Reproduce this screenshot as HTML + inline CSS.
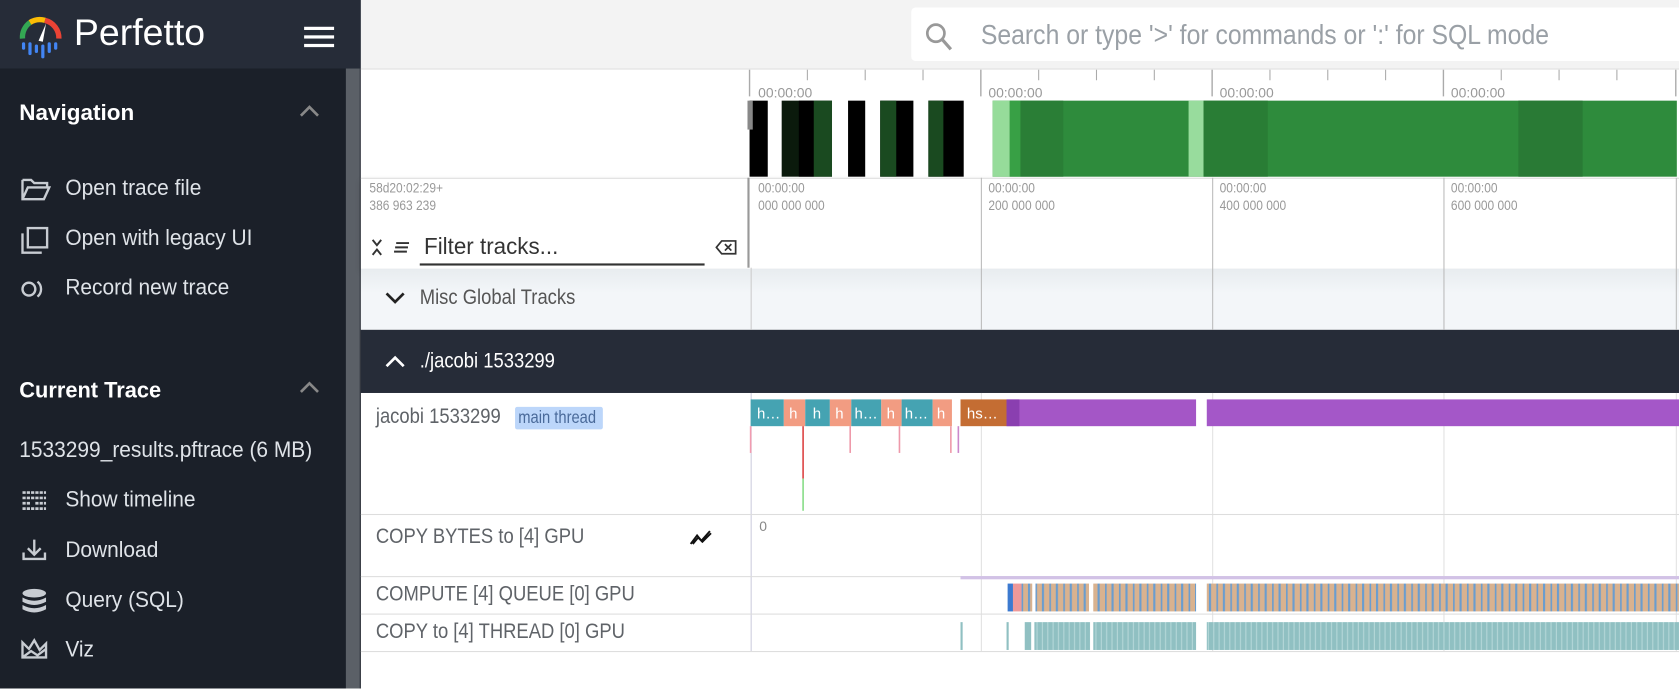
<!DOCTYPE html>
<html><head><meta charset="utf-8"><style>
html,body{margin:0;padding:0;width:1679px;height:688px;overflow:hidden;background:#fff;font-family:"Liberation Sans",sans-serif}
#w{position:absolute;left:0;top:0;width:1568px;height:643px;transform:scale(1.07079);transform-origin:0 0;overflow:hidden;background:#fff}
.a{position:absolute}
.c{display:inline-block;transform:scaleX(.86);transform-origin:left center;white-space:nowrap}
.side{color:#dfe3e8;font-size:21px}
.side .c{transform:scaleX(.93)}
.lbl{color:#5f6368;font-size:20px}
.t{font-size:13px;color:#999;line-height:16px}
.vl{position:absolute;width:1px;background:#e2e2e2}
</style></head><body><div id="w">
<!-- sidebar -->
<div class="a" style="left:0;top:0;width:337px;height:643px;background:#1b2029"></div>
<div class="a" style="left:0;top:0;width:337px;height:64px;background:#262c38"></div>
<div class="a" style="left:323px;top:64px;width:13px;height:579px;background:#5b6067"></div>
<svg class="a" style="left:16px;top:12px" width="44" height="44" viewBox="0 0 44 44">
<path d="M5 24 A17 17 0 0 1 12 9" stroke="#34a853" stroke-width="5" fill="none"/>
<path d="M12 9 A17 17 0 0 1 26 7" stroke="#fbbc05" stroke-width="5" fill="none"/>
<path d="M26 7 A17 17 0 0 1 39 24" stroke="#ea4335" stroke-width="5" fill="none"/>
<path d="M20 26 L27 10 L24 27 Z" fill="#fff"/>
<g stroke="#4285f4" stroke-width="3" stroke-linecap="round"><line x1="6" y1="29" x2="6" y2="33"/><line x1="12" y1="29" x2="12" y2="38"/><line x1="18" y1="31" x2="18" y2="36"/><line x1="24" y1="31" x2="24" y2="41"/><line x1="30" y1="29" x2="30" y2="36"/><line x1="36" y1="29" x2="36" y2="33"/></g></svg>
<div class="a" style="left:69px;top:11px;color:#fff;font-size:35px"><span class="c" style="transform:scaleX(1)">Perfetto</span></div>
<div class="a" style="left:284px;top:25px;width:28px;height:3px;background:#fff;box-shadow:0 8px 0 #fff,0 16px 0 #fff"></div>
<div class="a" style="left:18px;top:94px;color:#fff;font-size:21px;font-weight:bold"><span class="c" style="transform:scaleX(1)">Navigation</span></div>
<svg class="a" style="left:279px;top:97px" width="20" height="14"><path d="M2 11 L10 3 L18 11" stroke="#888" stroke-width="2.5" fill="none"/></svg>
<div class="a" style="left:18px;top:353px;color:#fff;font-size:21px;font-weight:bold"><span class="c" style="transform:scaleX(.97)">Current Trace</span></div>
<svg class="a" style="left:279px;top:355px" width="20" height="14"><path d="M2 11 L10 3 L18 11" stroke="#888" stroke-width="2.5" fill="none"/></svg>
<div class="a side" style="left:61px;top:164px"><span class="c">Open trace file</span></div>
<div class="a side" style="left:61px;top:211px"><span class="c">Open with legacy UI</span></div>
<div class="a side" style="left:61px;top:257px"><span class="c">Record new trace</span></div>
<div class="a side" style="left:18px;top:409px"><span class="c">1533299_results.pftrace (6 MB)</span></div>
<div class="a side" style="left:61px;top:455px"><span class="c">Show timeline</span></div>
<div class="a side" style="left:61px;top:502px"><span class="c">Download</span></div>
<div class="a side" style="left:61px;top:549px"><span class="c">Query (SQL)</span></div>
<div class="a side" style="left:61px;top:595px"><span class="c">Viz</span></div>
<svg class="a" style="left:19px;top:164px" width="30" height="460" fill="none" stroke="#c8ccd2" stroke-width="2.2">
<path d="M2 4 H10 L13 7 H25 V11 M2 4 V22 H22 L27 11 H7 L2 22"/>
<rect x="7" y="49" width="18" height="18"/><path d="M2 54 V72 H20"/>
<circle cx="8" cy="106" r="6"/><path d="M16 99 A9 9 0 0 1 16 113"/>
<g stroke-width="2.5"><path d="M2 296 H24 M2 301 H24 M2 306 H10 M14 306 H24 M2 311 H24" stroke-dasharray="3 1"/></g>
<path d="M13 340 V354 M7 348 L13 354 L19 348 M3 352 V358 H23 V352"/>
<g fill="#c8ccd2" stroke="none"><ellipse cx="13" cy="390" rx="11" ry="4"/><path d="M2 394 Q13 400 24 394 V398 Q13 404 2 398Z"/><path d="M2 401 Q13 407 24 401 V405 Q13 411 2 405Z"/></g>
<path d="M2 450 V436 L8 442 L13 434 L18 443 L24 437 V450 Z M2 450 L10 444 L16 448 L24 442"/>
</svg>
<!-- topbar -->
<div class="a" style="left:337px;top:0;width:1231px;height:64px;background:#f3f3f3;border-bottom:1px solid #ddd"></div>
<div class="a" style="left:851px;top:7px;width:730px;height:50px;background:#fff;border-radius:4px"></div>
<svg class="a" style="left:862px;top:19px" width="30" height="30"><circle cx="12" cy="12" r="8" stroke="#999" stroke-width="2.5" fill="none"/><path d="M18 18 L26 27" stroke="#999" stroke-width="3"/></svg>
<div class="a" style="left:916px;top:17px;color:#9aa0a6;font-size:26px"><span class="c" style="transform:scaleX(.89)">Search or type '&gt;' for commands or ':' for SQL mode</span></div>
<!-- overview -->
<div class="a" style="left:337px;top:65px;width:1231px;height:101px;background:#fff"></div>
<svg class="a" style="left:698px;top:65px" width="870" height="101">
<g stroke="#aaa" stroke-width="1.3"><line x1="2" y1="0" x2="2" y2="25"/><line x1="218" y1="0" x2="218" y2="25"/><line x1="434" y1="0" x2="434" y2="25"/><line x1="650" y1="0" x2="650" y2="25"/><line x1="867" y1="0" x2="867" y2="25"/>
<g stroke-width="1"><line x1="56" y1="0" x2="56" y2="10"/><line x1="110" y1="0" x2="110" y2="10"/><line x1="164" y1="0" x2="164" y2="10"/><line x1="272" y1="0" x2="272" y2="10"/><line x1="326" y1="0" x2="326" y2="10"/><line x1="380" y1="0" x2="380" y2="10"/><line x1="488" y1="0" x2="488" y2="10"/><line x1="542" y1="0" x2="542" y2="10"/><line x1="596" y1="0" x2="596" y2="10"/><line x1="704" y1="0" x2="704" y2="10"/><line x1="758" y1="0" x2="758" y2="10"/><line x1="812" y1="0" x2="812" y2="10"/></g></g>
<g font-size="13" fill="#999" font-family="Liberation Sans"><text x="10" y="26">00:00:00</text><text x="225" y="26">00:00:00</text><text x="441" y="26">00:00:00</text><text x="657" y="26">00:00:00</text></g>
<rect x="2" y="29" width="17" height="71" fill="#000"/><rect x="32" y="29" width="47" height="71" fill="#0b1a0c"/><rect x="48" y="29" width="14" height="71" fill="#000"/><rect x="62" y="29" width="17" height="71" fill="#1a4a20"/>
<rect x="94" y="29" width="16" height="71" fill="#000"/><rect x="124" y="29" width="31" height="71" fill="#000"/><rect x="124" y="29" width="15" height="71" fill="#1a4a20"/>
<rect x="169" y="29" width="33" height="71" fill="#000"/><rect x="169" y="29" width="14" height="71" fill="#1a4a20"/>
<rect x="0" y="29" width="5" height="27" fill="#888"/>
<rect x="229" y="29" width="639" height="71" fill="#2e8b3c"/><rect x="229" y="29" width="16" height="71" fill="#96dc9a"/><rect x="245" y="29" width="10" height="71" fill="#38a045"/><rect x="255" y="29" width="40" height="71" fill="#2a7e36"/><rect x="412" y="29" width="14" height="71" fill="#98dc9d"/><rect x="426" y="29" width="60" height="71" fill="#297d35"/><rect x="720" y="29" width="60" height="71" fill="#297a35"/>
</svg>
<!-- axis row -->
<div class="a" style="left:337px;top:166px;width:1231px;height:84px;background:#fff;border-top:1px solid #ddd;box-shadow:0 3px 6px rgba(0,0,0,.15)"></div>
<div class="a t" style="left:345px;top:168px"><span class="c">58d20:02:29+<br>386 963 239</span></div>
<div class="a t" style="left:708px;top:168px"><span class="c">00:00:00<br>000 000 000</span></div>
<div class="a t" style="left:923px;top:168px"><span class="c">00:00:00<br>200 000 000</span></div>
<div class="a t" style="left:1139px;top:168px"><span class="c">00:00:00<br>400 000 000</span></div>
<div class="a t" style="left:1355px;top:168px"><span class="c">00:00:00<br>600 000 000</span></div>
<svg class="a" style="left:344px;top:221px" width="50" height="20" fill="none" stroke="#333" stroke-width="1.8"><path d="M4 3 L8 8 L12 3 M4 17 L8 12 L12 17"/><path d="M26 6 H38 M25 10 H37 M24 14 H36"/></svg>
<div class="a" style="left:396px;top:217px;color:#333;font-size:22px"><span class="c" style="transform:scaleX(.95)">Filter tracks...</span></div>
<div class="a" style="left:392px;top:246px;width:266px;height:1.5px;background:#333"></div>
<svg class="a" style="left:668px;top:222px" width="22" height="18" fill="none" stroke="#333" stroke-width="1.6"><path d="M6 3 H19 V15 H6 L1 9 Z M9 6 L15 12 M15 6 L9 12"/></svg>
<!-- misc row -->
<div class="a" style="left:337px;top:251px;width:1231px;height:57px;background:linear-gradient(#e8ecef,#f3f6f9 40%)"></div>
<svg class="a" style="left:359px;top:271px" width="20" height="14"><path d="M2 3 L10 11 L18 3" stroke="#222" stroke-width="2.5" fill="none"/></svg>
<div class="a lbl" style="left:392px;top:267px;color:#555"><span class="c">Misc Global Tracks</span></div>
<!-- jacobi header -->
<div class="a" style="left:337px;top:308px;width:1231px;height:59px;background:#262c38"></div>
<svg class="a" style="left:359px;top:331px" width="20" height="14"><path d="M2 11 L10 3 L18 11" stroke="#fff" stroke-width="2.5" fill="none"/></svg>
<div class="a lbl" style="left:392px;top:326px;color:#fff"><span class="c">./jacobi 1533299</span></div>
<!-- grid lines -->
<div class="vl" style="left:916px;top:166px;height:142px;background:#bbb"></div>
<div class="vl" style="left:1132px;top:166px;height:142px;background:#bbb"></div>
<div class="vl" style="left:1348px;top:166px;height:142px;background:#bbb"></div>
<div class="vl" style="left:1565px;top:166px;height:142px;background:#bbb"></div>
<div class="vl" style="left:916px;top:367px;height:241px"></div>
<div class="vl" style="left:1132px;top:367px;height:241px"></div>
<div class="vl" style="left:1348px;top:367px;height:241px"></div>
<div class="vl" style="left:1565px;top:367px;height:241px"></div>
<div class="a" style="left:698px;top:166px;width:2px;height:84px;background:#999"></div>
<div class="vl" style="left:701px;top:250px;height:58px;background:#ccc"></div>
<div class="vl" style="left:701px;top:367px;height:241px;background:#ccd"></div>
<!-- separators -->
<div class="a" style="left:337px;top:480px;width:1231px;height:1px;background:#ddd"></div>
<div class="a" style="left:337px;top:538px;width:1231px;height:1px;background:#ddd"></div>
<div class="a" style="left:337px;top:573px;width:1231px;height:1px;background:#ddd"></div>
<div class="a" style="left:337px;top:608px;width:1231px;height:1px;background:#ddd"></div>
<!-- labels -->
<div class="a lbl" style="left:351px;top:378px"><span class="c">jacobi 1533299</span></div>
<div class="a" style="left:481px;top:380px;width:82px;height:21px;background:#bcd6fa;border-radius:2px;color:#4a6a9a;font-size:16px;line-height:21px"><span class="c" style="margin-left:3px">main thread</span></div>
<div class="a lbl" style="left:351px;top:490px"><span class="c">COPY BYTES to [4] GPU</span></div>
<svg class="a" style="left:643px;top:494px" width="24" height="16"><path d="M2 14 L8 6 L12 11 L20 2 M4 14 L9 8 L13 12 L21 4" stroke="#111" stroke-width="1.8" fill="none"/></svg>
<div class="a" style="left:709px;top:484px;font-size:13px;color:#888">0</div>
<div class="a lbl" style="left:351px;top:544px"><span class="c">COMPUTE [4] QUEUE [0] GPU</span></div>
<div class="a lbl" style="left:351px;top:579px"><span class="c">COPY to [4] THREAD [0] GPU</span></div>
<!-- slices -->
<svg class="a" style="left:700px;top:367px" width="868" height="241" font-family="Liberation Sans" font-size="14" fill="#fff">
<rect x="1" y="6" width="31" height="25" fill="#45a3b2"/><rect x="32" y="6" width="20" height="25" fill="#f29c82"/><rect x="52" y="6" width="23" height="25" fill="#45a3b2"/><rect x="75" y="6" width="20" height="25" fill="#f29c82"/><rect x="95" y="6" width="28" height="25" fill="#45a3b2"/><rect x="123" y="6" width="19" height="25" fill="#f29c82"/><rect x="142" y="6" width="29" height="25" fill="#45a3b2"/><rect x="171" y="6" width="18" height="25" fill="#f29c82"/>
<rect x="197" y="6" width="43" height="25" fill="#c46d33"/>
<rect x="240" y="6" width="177" height="25" fill="#a456c6"/><rect x="240" y="6" width="12" height="25" fill="#8a3fb0"/><rect x="427" y="6" width="441" height="25" fill="#a457c8"/>
<text x="7" y="24">h…</text><text x="37" y="24">h</text><text x="59" y="24">h</text><text x="80" y="24">h</text><text x="98" y="24">h…</text><text x="128" y="24">h</text><text x="145" y="24">h…</text><text x="175" y="24">h</text><text x="203" y="24">hs…</text>
<g stroke-width="1.5"><line x1="1" y1="31" x2="1" y2="56" stroke="#f29cb0"/><line x1="50" y1="31" x2="50" y2="80" stroke="#d44"/><line x1="50" y1="80" x2="50" y2="110" stroke="#8d8"/><line x1="94" y1="31" x2="94" y2="56" stroke="#e9a"/><line x1="140" y1="31" x2="140" y2="56" stroke="#e9a"/><line x1="188" y1="31" x2="188" y2="56" stroke="#e9a"/><line x1="195" y1="31" x2="195" y2="56" stroke="#c8c"/></g>
<rect x="197" y="171" width="671" height="3" fill="#d2c2e6"/>
<defs><pattern id="p1" width="13" height="10" patternUnits="userSpaceOnUse"><rect width="13" height="10" fill="#d9b28f"/><rect x="0" width="2" height="10" fill="#6a9dcf"/><rect x="7" width="1.5" height="10" fill="#6a9dcf"/></pattern>
<pattern id="p2" width="5" height="10" patternUnits="userSpaceOnUse"><rect width="5" height="10" fill="#90c0c2"/><rect x="3" width="1" height="10" fill="#b6d8d9"/></pattern></defs>
<rect x="241" y="178" width="5" height="26" fill="#3c7ad0"/><rect x="246" y="178" width="8" height="26" fill="#e99"/><rect x="254" y="178" width="10" height="26" fill="url(#p1)"/>
<rect x="267" y="178" width="50" height="26" fill="url(#p1)"/><rect x="321" y="178" width="96" height="26" fill="url(#p1)"/><rect x="427" y="178" width="441" height="26" fill="url(#p1)"/>
<rect x="197" y="214" width="2" height="26" fill="#90c0c2"/><rect x="240" y="214" width="2" height="26" fill="#90c0c2"/><rect x="257" y="214" width="6" height="26" fill="#90c0c2"/>
<rect x="266" y="214" width="52" height="26" fill="url(#p2)"/><rect x="321" y="214" width="96" height="26" fill="url(#p2)"/><rect x="427" y="214" width="441" height="26" fill="url(#p2)"/>
</svg>
</div></body></html>
